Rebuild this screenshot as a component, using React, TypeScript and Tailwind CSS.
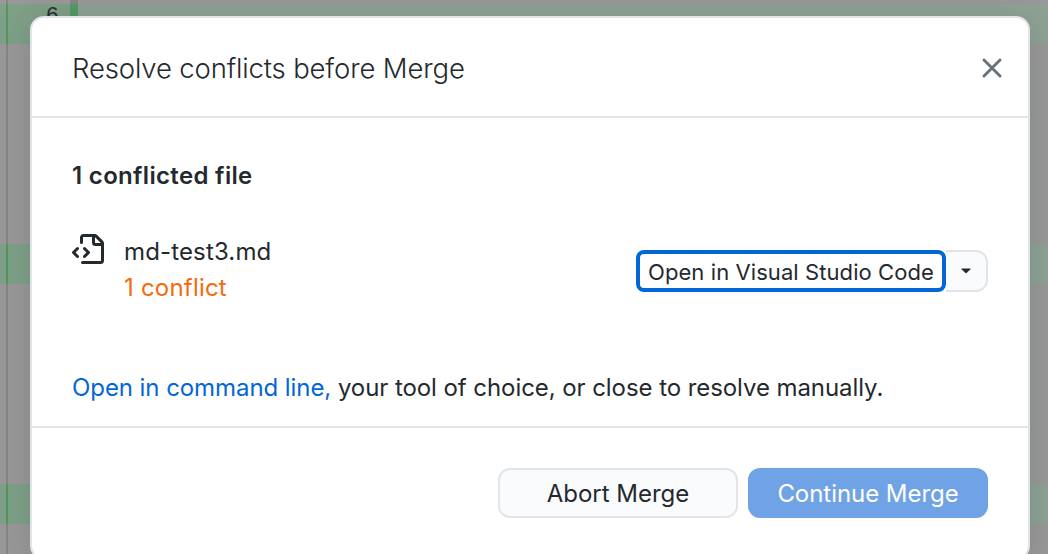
import React from "react";

function DiffRow({ changed, label, height }: { changed?: boolean; label?: string; height: string }) {
  return (
    <div className={`flex w-full shrink-0 ${height}`}>
      <div className={`w-1.5 shrink-0 ${changed ? "bg-[#7fa187]" : "bg-[#999999]"}`} />
      <div className={`w-0.5 shrink-0 ${changed ? "bg-[#529660]" : "bg-[#868686]"}`} />
      <div className={`w-[62px] shrink-0 pt-px pr-[11px] text-right font-['Liberation_Mono',monospace] text-[22px] leading-6 font-medium text-[#2a2e32] ${changed ? "bg-[#7fa187]" : "bg-[#999999]"}`}>
        {label}
      </div>
      <div className={`w-2 shrink-0 ${changed ? "bg-[#529c62]" : "bg-[#868686]"}`} />
      <div className={`grow ${changed ? "bg-[#8fa395]" : "bg-[#999999]"}`} />
    </div>
  );
}

function FileCodeIcon() {
  return (
    <svg width="32" height="32" viewBox="0 0 16 16" fill="#24292e" className="shrink-0">
      <path d="M4 1.75C4 .784 4.784 0 5.75 0h5.586c.464 0 .909.184 1.237.513l2.914 2.914c.329.328.513.773.513 1.237v8.586A1.75 1.75 0 0 1 14.25 15h-9a.75.75 0 0 1 0-1.5h9a.25.25 0 0 0 .25-.25V6h-2.75A1.75 1.75 0 0 1 10 4.25V1.5H5.75a.25.25 0 0 0-.25.25v2.5a.75.75 0 0 1-1.5 0Zm1.72 4.97a.75.75 0 0 1 1.06 0l2 2a.75.75 0 0 1 0 1.06l-2 2a.749.749 0 0 1-1.275-.326.749.749 0 0 1 .215-.734l1.47-1.47-1.47-1.47a.75.75 0 0 1 0-1.06ZM3.28 7.78 1.81 9.25l1.47 1.47a.751.751 0 0 1-.018 1.042.751.751 0 0 1-1.042.018l-2-2a.75.75 0 0 1 0-1.06l2-2a.751.751 0 0 1 1.042.018.751.751 0 0 1 .018 1.042Zm8.22-6.218V4.25c0 .138.112.25.25.25h2.688l-.011-.013-2.914-2.914-.013-.011Z" />
    </svg>
  );
}

export default function App() {
  return (
    <div className="relative h-[554px] w-[1048px] overflow-hidden bg-[#999999] font-['Inter',sans-serif] text-[#24292e]">
      <div className="flex h-full flex-col">
        <DiffRow height="h-1" />
        <DiffRow height="h-10" changed label="6" />
        <DiffRow height="h-[200px]" />
        <DiffRow height="h-10" changed />
        <DiffRow height="h-[200px]" />
        <DiffRow height="h-10" changed />
        <DiffRow height="h-[30px]" />
      </div>

      <div className="absolute top-4 left-[30px] flex h-[544px] w-[1000px] flex-col rounded-[14px] border-2 border-[#e1e4e8] bg-white shadow-[0_4px_36px_rgba(36,41,46,0.18)]">
        <header className="flex h-[100px] shrink-0 items-center justify-between border-b-2 border-[#e1e4e8] pt-0.5 pr-5 pl-10">
          <h1 className="pb-px text-[27.5px] leading-9 font-[360] tracking-[-0.15px] whitespace-nowrap">Resolve conflicts before Merge</h1>
          <button className="flex" aria-label="Close">
            <svg width="32" height="32" viewBox="0 0 32 32" fill="none" stroke="#6a737d" strokeWidth="3" strokeLinecap="round">
              <path d="M8 8 24 24M24 8 8 24" />
            </svg>
          </button>
        </header>

        <main className="flex h-[310px] shrink-0 flex-col border-b-2 border-[#e1e4e8] px-10 pt-10">
          <h2 className="text-2xl leading-9 font-semibold tracking-[0.33px] whitespace-nowrap">1 conflicted file</h2>
          <div className="mt-10 flex h-[72px] items-start">
            <FileCodeIcon />
            <div className="ml-5 grow text-2xl leading-9 whitespace-nowrap">
              <div className="tracking-[0.15px]">md-test3.md</div>
              <div className="tracking-[0.2px] text-[#f66a0a]">1 conflict</div>
            </div>
            <div className="mt-4 flex h-[42px]">
              <button className="z-10 flex w-[310px] items-center justify-center rounded-lg border-4 border-[#0366d6] bg-white pt-0.5 text-[22px] tracking-[0.08px] whitespace-nowrap">
                Open in Visual Studio Code
              </button>
              <button className="flex w-[42px] items-center justify-center rounded-r-xl border-2 border-l-0 border-[#e1e4e8] bg-[#fafbfc]" aria-label="More editors">
                <svg width="10" height="6" viewBox="0 0 10 6" fill="#24292e">
                  <path d="M.7.5h8.6q.7.1.2.7L5.5 5q-.5.5-1 0L.5 1.2Q0 .6.7.5Z" />
                </svg>
              </button>
            </div>
          </div>
          <p className="mt-16 text-2xl leading-9 tracking-[-0.07px] whitespace-nowrap">
            <a className="text-[#0366d6]">Open in command line,</a> your tool of choice, or close to resolve manually.
          </p>
        </main>

        <footer className="flex justify-end gap-2.5 px-10 pt-10">
          <button className="h-[50px] w-60 rounded-xl border-2 border-[#e1e4e8] bg-[#fafbfc] pt-0.5 text-2xl whitespace-nowrap">
            Abort Merge
          </button>
          <button className="h-[50px] w-60 rounded-xl bg-[#70a3e6] pt-0.5 text-2xl tracking-[-0.05px] whitespace-nowrap text-white">
            Continue Merge
          </button>
        </footer>
      </div>
    </div>
  );
}
